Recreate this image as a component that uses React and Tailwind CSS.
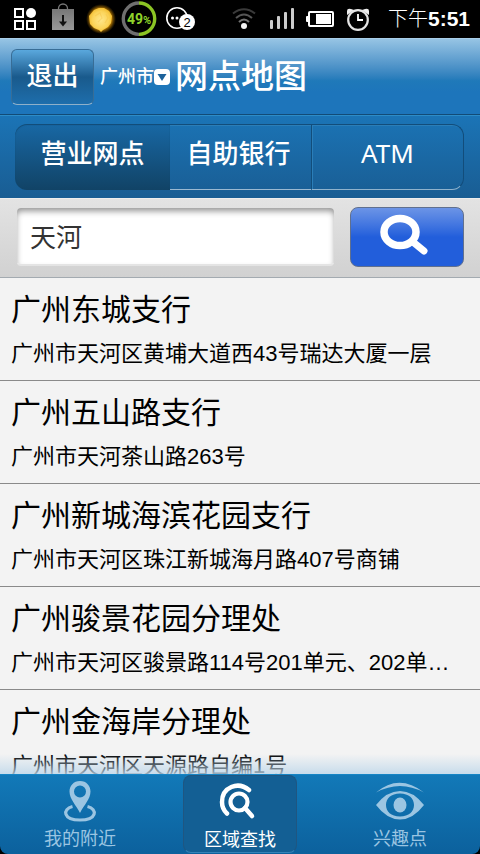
import React, { useState } from "react";

const branches = [
  { name: "广州东城支行", address: "广州市天河区黄埔大道西43号瑞达大厦一层" },
  { name: "广州五山路支行", address: "广州市天河茶山路263号" },
  { name: "广州新城海滨花园支行", address: "广州市天河区珠江新城海月路407号商铺" },
  { name: "广州骏景花园分理处", address: "广州市天河区骏景路114号201单元、202单…" },
  { name: "广州金海岸分理处", address: "广州市天河区天源路自编1号" },
];

function StatusBar() {
  return (
    <div className="flex h-[38px] shrink-0 items-center justify-between bg-black pr-[10px] pl-[14px] text-white">
      <div className="flex items-center">
        <svg className="mr-4" width="22" height="22" viewBox="0 0 22 22" fill="none" stroke="#fff" strokeWidth="2">
          <rect x="1" y="1" width="8" height="8" />
          <rect x="1" y="13" width="8" height="8" />
          <rect x="13" y="13" width="8" height="8" />
          <circle cx="17" cy="5" r="5" fill="#fff" stroke="none" />
        </svg>
        <svg className="mr-3 mb-1" width="22" height="28" viewBox="0 0 22 28">
          <defs>
            <linearGradient id="bag" x1="0" y1="0" x2="0" y2="1">
              <stop offset="0" stopColor="#777" />
              <stop offset="1" stopColor="#999" />
            </linearGradient>
          </defs>
          <path d="M6.500 7V5.500a4.500 4.500 0 0 1 9 0V7" fill="none" stroke="#777" strokeWidth="1.300" />
          <rect y="6" width="22" height="21" fill="url(#bag)" />
          <path d="M11 12v8" stroke="#111" strokeWidth="2" />
          <path d="M7 18.500h8L11 23.500z" fill="#111" />
        </svg>
        <svg className="mr-[5px]" width="30" height="34" viewBox="0 0 30 34">
          <defs>
            <radialGradient id="glow">
              <stop offset="0.700" stopColor="#b87c04" />
              <stop offset="1" stopColor="#7a5000" stopOpacity="0" />
            </radialGradient>
            <radialGradient id="sun">
              <stop offset="0" stopColor="#ffe78c" />
              <stop offset="0.700" stopColor="#fbd45a" />
              <stop offset="1" stopColor="#f3bf35" />
            </radialGradient>
          </defs>
          <circle cx="15" cy="17" r="15" fill="url(#glow)" />
          <path d="M8 8l5-2 5 0 5 3 3 5-1 7-3 4-5 3-2 2-2-2-5-2-4-4-1-8z" fill="url(#sun)" />
          <path d="M9 14l5-3 2 5-4 4m8-8l2 4-3 5" fill="none" stroke="#f3bd3c" strokeWidth="1.200" opacity=".35" />
        </svg>
        <svg className="mr-[9px]" width="36" height="38" viewBox="0 0 36 38">
          <path d="M18 3a15.700 15.700 0 0 0 0 31.400" fill="none" stroke="#6f6f6f" strokeWidth="3.400" />
          <path d="M18 3a15.700 15.700 0 0 1 0 31.400" fill="none" stroke="#8cc424" strokeWidth="3.400" />
          <text x="18" y="24" textAnchor="middle" fontFamily="Roboto, sans-serif" fontWeight="700" fill="#8fd32a">
            <tspan fontSize="14">49</tspan>
            <tspan fontSize="11">%</tspan>
          </text>
        </svg>
        <svg width="30" height="26" viewBox="0 0 30 26">
          <circle cx="11" cy="12" r="10.200" fill="none" stroke="#fff" strokeWidth="1.600" />
          <circle cx="6.500" cy="12" r="1.500" fill="#fff" />
          <circle cx="11" cy="12" r="1.500" fill="#fff" />
          <circle cx="21" cy="16" r="8" fill="#fff" />
          <text x="21" y="20.500" textAnchor="middle" fontFamily="Liberation Sans, sans-serif" fontSize="13" fill="#000">2</text>
        </svg>
      </div>
      <div className="flex items-center">
        <svg className="mr-[14px]" width="24" height="22" viewBox="0 0 24 22" fill="none" strokeWidth="2">
          <path d="M1 5.500Q12-3 23 5.500" stroke="#3a3a3a" />
          <path d="M4 10Q12 3 20 10" stroke="#555" />
          <path d="M7 14Q12 9 17 14" stroke="#737373" />
          <circle cx="12" cy="18" r="3" fill="#f4f4f4" />
        </svg>
        <svg className="mr-3" width="24" height="22" viewBox="0 0 24 22" fill="#ccc">
          <rect y="12" width="3" height="9" rx="1" />
          <rect x="7" y="8" width="3" height="13" rx="1" />
          <rect x="14" y="4" width="3" height="17" rx="1" />
          <rect x="21" width="3" height="21" rx="1" />
        </svg>
        <svg className="mr-[13px]" width="28" height="16" viewBox="0 0 28 16">
          <rect y="5" width="3" height="6" rx="1" fill="#fff" />
          <rect x="3" y="1" width="24" height="14" rx="1" fill="none" stroke="#fff" strokeWidth="2" />
          <rect x="10" y="3" width="15" height="10" fill="#fff" />
        </svg>
        <svg className="mr-[19px]" width="22" height="23" viewBox="0 0 22 23" fill="none">
          <path d="M0 7V3q0-3 4-2l3 1zM22 7V3q0-3-4-2l-3 1z" fill="#eee" />
          <circle cx="11" cy="12" r="9.800" fill="#000" stroke="#e4e4e4" strokeWidth="2.200" />
          <path d="M11 6v6h5" stroke="#fff" strokeWidth="1.800" />
        </svg>
        <span className="text-[20px] leading-6 font-light">下午</span>
        <span className="text-[21px] leading-6 font-bold">5:51</span>
      </div>
    </div>
  );
}

function PinIcon() {
  return (
    <svg width="34" height="41" viewBox="0 0 34 41">
      <path fillRule="evenodd" fill="#9bc5e2" d="M17 0C10.500 0 6.500 5 6.500 10.500C6.500 18 13 24 17 32C21 24 27.500 18 27.500 10.500C27.500 5 23.500 0 17 0ZM17 4.500A6 6 0 1 1 17 16.500A6 6 0 1 1 17 4.500Z" />
      <path d="M9.500 25.500C-1 28 0 39 17 39S35 28 24.500 25.500" fill="none" stroke="#9bc5e2" strokeWidth="3.200" />
    </svg>
  );
}

function AreaIcon() {
  return (
    <svg width="42" height="38" viewBox="0 0 42 38" fill="none" stroke="#fff" strokeLinecap="round">
      <circle cx="20" cy="19" r="8.500" strokeWidth="4.200" />
      <path d="M26 25l7 8" strokeWidth="4.500" />
      <path d="M30 7C19-2 3 4 3 19Q3 26 8 30.500" strokeWidth="4.500" />
    </svg>
  );
}

function EyeIcon() {
  return (
    <svg width="50" height="38" viewBox="0 0 50 38" fill="#9bc5e2">
      <path d="M1 10.500Q24-9 49 10.500Q25-2.500 1 10.500Z" />
      <path fillRule="evenodd" d="M1 23Q12 9 25 9T49 23Q38 37.500 25 37.500T1 23ZM25 11.500C16 11.500 11 16.500 11 23S16 34.500 25 34.500S39 29.500 39 23S34 11.500 25 11.500Z" />
      <ellipse cx="25" cy="23" rx="6.500" ry="7.500" />
    </svg>
  );
}

const tabs = ["营业网点", "自助银行", "ATM"];
const tabShape = [
  "rounded-l-xl bg-linear-to-b from-[#1868a5] to-[#114366] font-medium shadow-[inset_0_1px_1px_#124b76]",
  "border-y border-t-[#124d7b] border-b-[#9ab9d1] pr-1 font-medium shadow-[inset_0_1px_0_#2b7eb8]",
  "rounded-r-xl border border-[#124d7b] border-b-[#8fb2cc] shadow-[inset_1px_1px_0_#2b7eb8]",
];

const navItems = [
  { label: "我的附近", Icon: PinIcon },
  { label: "区域查找", Icon: AreaIcon },
  { label: "兴趣点", Icon: EyeIcon },
];

export default function App() {
  const [query, setQuery] = useState("天河");
  return (
    <div className="flex h-screen flex-col overflow-hidden bg-[#f3f3f3] font-['Liberation_Sans','Noto_Sans_CJK_SC',sans-serif]">
      <StatusBar />
      <header className="flex h-[78px] shrink-0 items-center border-t border-b border-t-[#a9cee8] border-b-[#2d8cc8] bg-linear-to-b from-[#96c4e4] via-[#1f79b9] via-55% to-[#1d75bb] to-70% pl-[11px] text-white shadow-[inset_0_-1px_0_#124b77]">
        <button className="h-14 w-[83px] rounded-md border border-[#386d96] border-b-[#8fb0c9] bg-linear-to-b from-[#5aa8dd] via-[#195a8c] via-50% to-[#1e6eac] pb-[2px] text-[26px] font-medium">退出</button>
        <button className="ml-[6px] flex items-center text-[18px] font-medium">
          广州市
          <svg width="16" height="16" viewBox="0 0 16 16">
            <rect width="16" height="16" rx="4" fill="#fff" />
            <path d="M3.500 5h9L8 12z" fill="#1c629b" />
          </svg>
        </button>
        <h1 className="ml-[5px] text-[33px] leading-10 font-medium">网点地图</h1>
      </header>

      <div className="h-[82px] shrink-0 bg-linear-to-b from-[#1b74b6] to-[#195d93] pt-2 pr-4 pl-[15px]">
        <div className="grid h-[66px] grid-cols-[155fr_141fr_153fr] text-[26px] text-white">
          {tabs.map((tab, i) => (
            <button key={tab} className={"pb-2 font-['Noto_Sans','Noto_Sans_CJK_SC',sans-serif] " + tabShape[i]}>
              {tab}
            </button>
          ))}
        </div>
      </div>

      <form className="flex h-20 shrink-0 items-center gap-4 border-t border-b border-t-[#ededed] border-b-[#a3aab0] bg-linear-to-b from-[#e3e3e3] to-[#d1d1d1] pr-4 pb-[2px] pl-[17px]" onSubmit={(e) => e.preventDefault()}>
        <input
          aria-label="搜索区域"
          className="h-[58px] min-w-0 flex-1 rounded-sm border-b-2 border-[#e4e4e4] bg-white px-[13px] pb-[2px] text-[26px] text-[#333] shadow-[inset_0_4px_6px_-1px_#929292] outline-none"
          value={query}
          onChange={(e) => setQuery(e.target.value)}
        />
        <button aria-label="搜索" className="flex h-[60px] w-[114px] justify-center rounded-lg border border-[#60708f] bg-linear-to-b from-[#6c94e6] via-[#225edb] via-50% to-[#225edb] pt-[6px]">
          <svg width="56" height="44" viewBox="0 0 56 44" fill="none" stroke="#fff" strokeLinecap="round">
            <ellipse cx="21" cy="18" rx="16" ry="13.500" strokeWidth="7.500" />
            <path d="M34 28l11 9" strokeWidth="7" />
          </svg>
        </button>
      </form>

      <main className="relative min-h-0 flex-1 overflow-hidden">
        <ul>
          {branches.map((b) => (
            <li key={b.name} className="border-b border-[#8a8a8a] px-[11px] pt-3 pb-[6px] text-black">
              <h2 className="truncate text-[30px] leading-10 font-normal">{b.name}</h2>
              <p className="mt-1 truncate text-[22px] leading-10">{b.address}</p>
            </li>
          ))}
        </ul>
        <div className="pointer-events-none absolute inset-x-0 bottom-0 h-5 bg-linear-to-b from-[#f3f3f300] to-[#bed7ead0]" />
      </main>

      <div className="shrink-0 bg-black">
        <nav className="grid h-20 grid-cols-3 overflow-hidden rounded-b-lg border-t border-[#1685c5] bg-linear-to-b from-[#1279b8] to-[#0c619d]">
          {navItems.map(({ label, Icon }, i) => (
            <button
              key={label}
              className={
                i === 1
                  ? "mx-auto flex h-[78px] w-[114px] flex-col items-center rounded-lg border border-[#1f5681] border-b-[#3483b8] bg-[#135f94] text-[18px] text-white"
                  : "flex h-[78px] flex-col items-center text-[18px] text-[#9bc5e2]"
              }
            >
              <span className="flex h-[52px] items-center">
                <Icon />
              </span>
              <span className="leading-6">{label}</span>
            </button>
          ))}
        </nav>
      </div>
    </div>
  );
}
